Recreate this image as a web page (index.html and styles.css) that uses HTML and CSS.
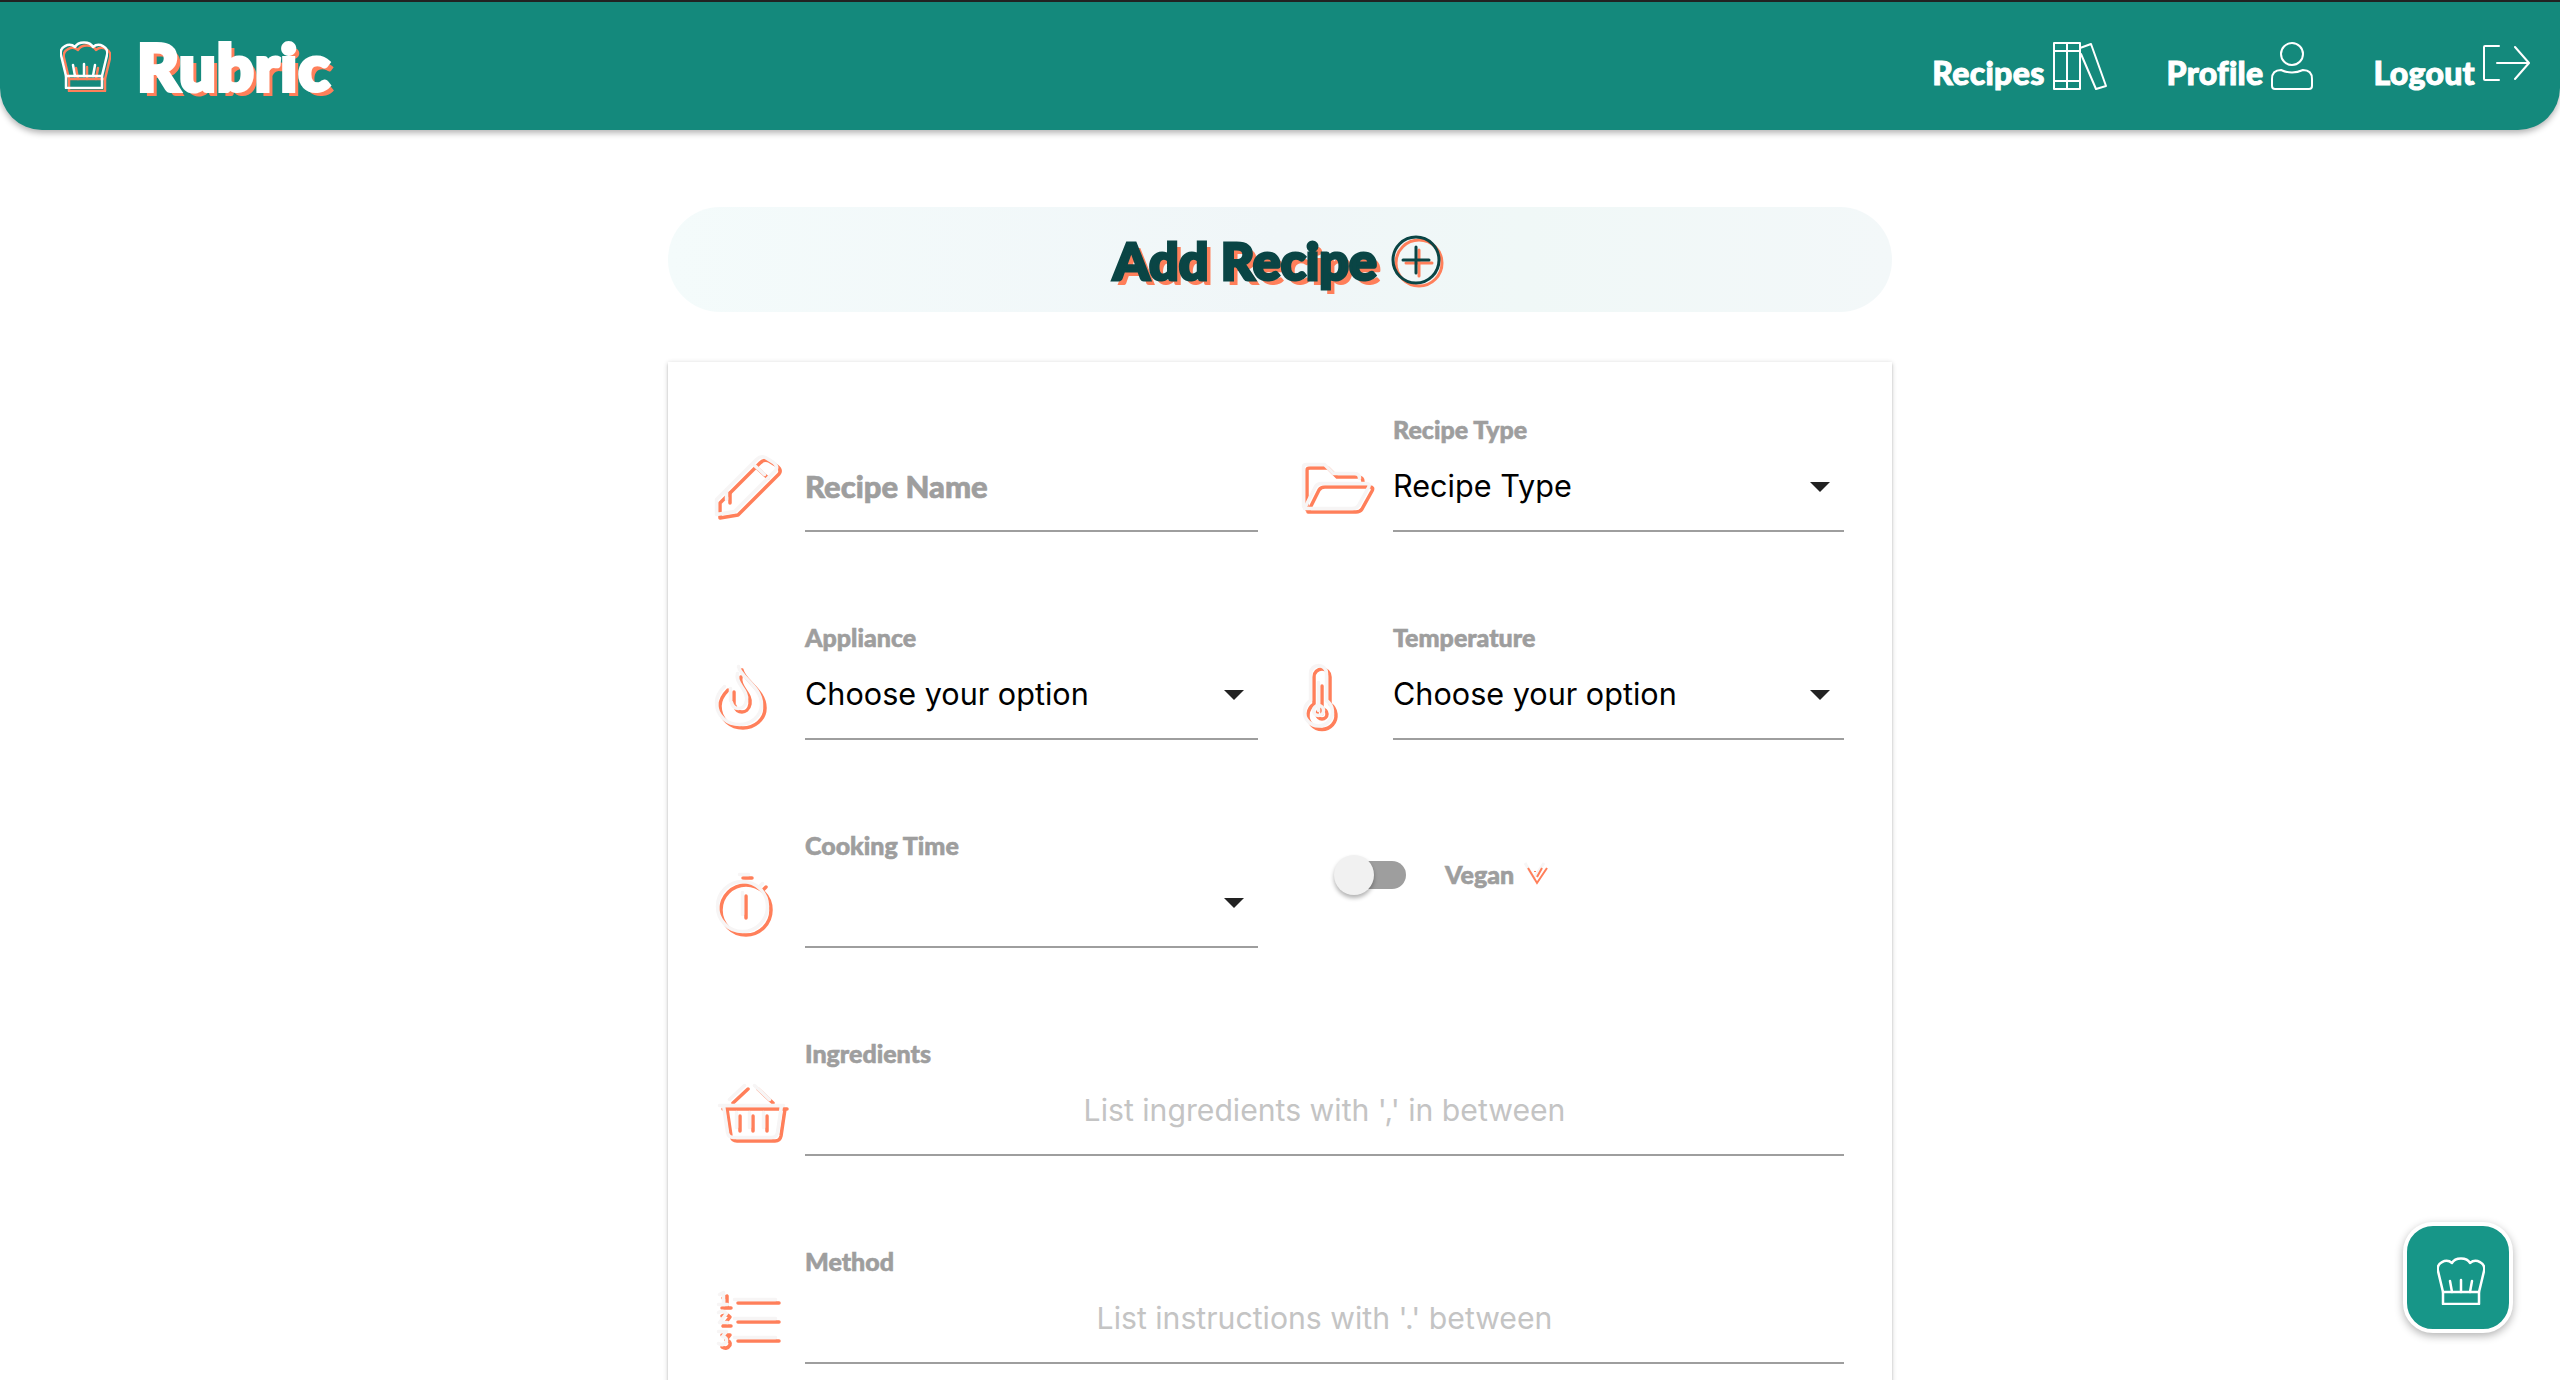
FILE: index.html
```html
<!DOCTYPE html>
<html lang="en">
<head>
  <meta charset="UTF-8" />
  <title>Rubric - Add Recipe</title>
  <link rel="stylesheet" href="styles.css">
</head>
<body>
  <!-- shared icon shapes -->
  <svg class="defs" width="0" height="0">
    <symbol id="hat" viewBox="0 0 48 48" overflow="visible">
      <path d="M6 35 L1 14 C-1 6 9 1 15 6 C18 0 30 0 33 6 C39 1 49 6 47 14 L42 35" />
      <rect x="6" y="35" width="36" height="12" />
      <path d="M13 24 L15 35 M24 23 V35 M35 24 L33 35" />
    </symbol>
    <symbol id="pencil" viewBox="0 0 87 72" overflow="visible">
      <path d="M2 58 L2 43 L42 3 Q46 -1 51 1 L59 6 Q64 10 61 14 L20 55 Z" />
      <path d="M39 8 L50 18 M12 33 V43" />
    </symbol>
    <symbol id="folder" viewBox="0 0 87 72" overflow="visible">
      <path d="M1 50 V10 Q1 8 4 8 H22 L31 17 H52 Q57 17 57 22" />
      <path d="M2 52 L13 30 Q15 27 19 27 H64 Q68 27 66 31 L56 49 Q54 52 50 52 Z" />
    </symbol>
    <symbol id="flame" viewBox="0 0 87 72" overflow="visible">
      <path d="M24 2 C26 13 47 22 47 40 C47 52 36 60 25 60 C13 60 2 52 2 38 C2 31 6 26 10 22" />
      <path d="M23 9 C20 19 34 25 32 36 C31 42 27 44 24 44 C21 44 18 42 17 38 M16 24 V36" />
    </symbol>
    <symbol id="thermo" viewBox="0 0 87 72" overflow="visible">
      <path d="M8 36 V9 A8 8 0 0 1 24 9 V36 A14 14 0 1 1 8 36 Z" />
      <path d="M16 18 V46" />
      <circle class="dot" cx="16" cy="46" r="5" />
    </symbol>
    <symbol id="timer" viewBox="0 0 87 72" overflow="visible">
      <circle cx="28" cy="34" r="25" />
      <path d="M25 2 H34 M45 14 L48 11 M28 20 V42" />
    </symbol>
    <symbol id="basket" viewBox="0 0 87 72" overflow="visible">
      <path d="M5 25 H69 M9 25 L13 52 Q14 57 19 57 H57 Q62 57 63 52 L67 25" />
      <path d="M15 19 L30 5 M40 5 L55 19 M22 32 V47 M35 32 V47 M49 32 V47" />
    </symbol>
    <symbol id="steps" viewBox="0 0 87 72" overflow="visible">
      <path d="M20 11 H61 M20 30 H61 M20 49 H61" />
      <path d="M5 6 L9 4 V16 M4 16 H13" />
      <path d="M4 24 Q9 21 12 25 L5 34 H13" />
      <path d="M4 43 H12 L8 48 Q13 49 12 53 Q9 58 4 55" />
    </symbol>
  </svg>

  <nav class="topbar">
    <a class="brand" href="#">
      <span class="hat-logo">
        <svg class="hat-back" width="48" height="48"><use href="#hat" /></svg>
        <svg class="hat-front" width="48" height="48"><use href="#hat" /></svg>
      </span>
      <span class="brand-name">Rubric</span>
    </a>
    <ul class="nav-links">
      <li>
        <a href="#"><span>Recipes</span>
          <svg width="54" height="48" viewBox="0 0 54 48">
            <rect x="1" y="1" width="26" height="46" />
            <path d="M14 1 V47 M1 9 H27 M1 39 H27" />
            <path d="M27 6 L38 2 L53 44 L43 47 L28 12" />
          </svg>
        </a>
      </li>
      <li>
        <a href="#"><span>Profile</span>
          <svg width="42" height="48" viewBox="0 0 42 48">
            <ellipse cx="21" cy="12" rx="11" ry="11" />
            <path d="M1 44 V37 Q1 28 10 28 Q21 33 32 28 Q41 28 41 37 V44 Q41 47 38 47 H4 Q1 47 1 44 Z" />
          </svg>
        </a>
      </li>
      <li>
        <a class="logout" href="#"><span>Logout</span>
          <svg width="47" height="36" viewBox="0 0 47 36">
            <path d="M16 1 H2 Q1 1 1 2 V34 Q1 35 2 35 H16" />
            <path d="M14 18 H46 M32 2 L46 18 L32 34" />
          </svg>
        </a>
      </li>
    </ul>
  </nav>

  <main class="page">
    <h1 class="title">
      <span>Add Recipe</span>
      <svg class="plus" width="56" height="56" viewBox="0 0 56 56">
        <g class="plus-back">
          <circle cx="28" cy="28" r="23" />
          <path d="M15 28 H41 M28 15 V41" />
        </g>
        <g class="plus-front">
          <circle cx="25" cy="25" r="23" />
          <path d="M12 25 H38 M25 12 V38" />
        </g>
      </svg>
    </h1>

    <form class="card">
      <div class="form-grid">
        <div class="field">
          <svg class="ico"><use class="back" href="#pencil" /><use class="front" href="#pencil" /></svg>
          <div class="control">
            <div class="label"></div>
            <div class="box"><span class="name-hint">Recipe Name</span></div>
          </div>
        </div>

        <div class="field">
          <svg class="ico"><use class="back" href="#folder" /><use class="front" href="#folder" /></svg>
          <div class="control">
            <div class="label">Recipe Type</div>
            <div class="box"><span>Recipe Type</span><i class="caret"></i></div>
          </div>
        </div>

        <div class="field">
          <svg class="ico"><use class="back" href="#flame" /><use class="front" href="#flame" /></svg>
          <div class="control">
            <div class="label">Appliance</div>
            <div class="box"><span>Choose your option</span><i class="caret"></i></div>
          </div>
        </div>

        <div class="field">
          <svg class="ico"><use class="back" href="#thermo" /><use class="front" href="#thermo" /></svg>
          <div class="control">
            <div class="label">Temperature</div>
            <div class="box"><span>Choose your option</span><i class="caret"></i></div>
          </div>
        </div>

        <div class="field">
          <svg class="ico"><use class="back" href="#timer" /><use class="front" href="#timer" /></svg>
          <div class="control">
            <div class="label">Cooking Time</div>
            <div class="box"><span></span><i class="caret"></i></div>
          </div>
        </div>

        <div class="vegan">
          <div class="switch"><i class="thumb"></i></div>
          <span class="label">Vegan</span>
          <svg class="vegan-mark" width="22" height="24" viewBox="0 0 22 24">
            <path class="v-front" d="M1 6 L10 21 L20 6" transform="translate(-3 -5)" />
            <path class="v-back" d="M1 6 L10 21 L20 6 M15 6 L10 15 M8 9 V10" />
          </svg>
        </div>

        <div class="field wide">
          <svg class="ico"><use class="back" href="#basket" /><use class="front" href="#basket" /></svg>
          <div class="control">
            <div class="label">Ingredients</div>
            <div class="box hint">List ingredients with ',' in between</div>
          </div>
        </div>

        <div class="field wide">
          <svg class="ico"><use class="back" href="#steps" /><use class="front" href="#steps" /></svg>
          <div class="control">
            <div class="label">Method</div>
            <div class="box hint">List instructions with '.' between</div>
          </div>
        </div>
      </div>
    </form>
  </main>

  <a class="fab" href="#">
    <svg width="48" height="48"><use href="#hat" /></svg>
  </a>
</body>
</html>
```

FILE: styles.css
```css
* {
  box-sizing: border-box;
}

html, body {
  height: 1380px;
  overflow: hidden;
}

body {
  margin: 0;
  background: #fff;
  font-family: Inter, "Liberation Sans", sans-serif;
  color: #000;
}

a {
  color: inherit;
  text-decoration: none;
}

.defs {
  position: absolute;
}

symbol {
  fill: none;
  stroke-linecap: round;
  stroke-linejoin: round;
}

/* top bar */
.topbar {
  height: 130px;
  border-top: 2px solid #222;
  background: #14897c;
  border-radius: 0 0 42px 42px;
  box-shadow: 0 3px 6px rgba(0, 0, 0, 0.3);
  display: flex;
  justify-content: space-between;
  align-items: center;
  padding: 0 30px 0 60px;
  color: #fff;
  font-family: Lato, sans-serif;
  font-weight: 900;
}

.brand {
  display: flex;
  align-items: center;
  gap: 26px;
}

.hat-logo {
  position: relative;
  width: 51px;
  height: 51px;
}

.hat-logo svg {
  position: absolute;
  fill: none;
  stroke-width: 2.5;
}

.hat-back {
  left: 3px;
  top: 3px;
  stroke: #ff7f5a;
}

.hat-front {
  left: 0;
  top: 0;
  stroke: #fff;
}

.brand-name {
  font-size: 65px;
  line-height: 64px;
  letter-spacing: 1px;
  -webkit-text-stroke: 4px #fff;
  text-shadow: 5px 5px 0 #ff7f5a;
}

.nav-links {
  display: flex;
  gap: 60px;
  list-style: none;
  margin: 0;
  padding: 0;
}

.nav-links a {
  display: flex;
  align-items: center;
  gap: 8px;
  font-size: 32px;
  letter-spacing: 0.3px;
  -webkit-text-stroke: 1px #fff;
}

.nav-links span {
  margin-top: 12px;
}

.nav-links svg {
  fill: none;
  stroke: #fff;
  stroke-width: 2;
  stroke-linecap: round;
  stroke-linejoin: round;
}

.nav-links .logout svg {
  margin-top: -6px;
}

/* page */
.page {
  width: 1224px;
  margin: 77px auto 0;
}

.title {
  height: 105px;
  margin: 0 0 50px;
  border-radius: 52px;
  background: linear-gradient(90deg, #f4fbfb, #f0f6f8 50%, #f0f8f7 70%, #f3f8f9);
  display: flex;
  justify-content: center;
  align-items: center;
  gap: 14px;
  font-family: Lato, sans-serif;
  font-size: 52px;
  font-weight: 900;
  color: #0a4545;
  -webkit-text-stroke: 3px #0a4545;
  text-shadow: 5px 5px 0 #ff7f5a;
}

.plus {
  margin-top: 6px;
  fill: none;
  stroke-width: 3;
  stroke-linecap: round;
}

.plus-back {
  stroke: #ff7f5a;
}

.plus-front {
  stroke: #0a4545;
}

.card {
  height: 1200px;
  padding: 52px 48px 0 50px;
  background: #fff;
  box-shadow: 0 2px 2px rgba(0, 0, 0, 0.14), 0 3px 1px -2px rgba(0, 0, 0, 0.12), 0 1px 5px rgba(0, 0, 0, 0.2);
}

.form-grid {
  display: grid;
  grid-template-columns: 540px 538px;
  column-gap: 48px;
  row-gap: 90px;
}

.field {
  display: flex;
  align-items: flex-end;
}

.wide {
  grid-column: 1 / 3;
}

.ico {
  flex: none;
  width: 87px;
  height: 72px;
  overflow: visible;
}

.ico .back {
  stroke: #ff7f5a;
  stroke-width: 3.5;
  fill: none;
}

.ico .front {
  stroke: #f7f5f5;
  stroke-width: 3.5;
  fill: none;
  transform: translate(-3.5px, -3.5px);
}

.ico .dot {
  fill: currentColor;
}

.control {
  flex: 1;
}

.label {
  height: 30px;
  line-height: 30px;
  font-family: Lato, sans-serif;
  font-size: 25px;
  font-weight: 900;
  color: #9e9e9e;
  -webkit-text-stroke: 0.6px #9e9e9e;
}

.box {
  height: 88px;
  border-bottom: 2px solid #9e9e9e;
  padding: 0 14px 3px 0;
  display: flex;
  justify-content: space-between;
  align-items: center;
  font-size: 30.6px;
}

.name-hint {
  font-family: Lato, sans-serif;
  font-size: 31px;
  font-weight: 900;
  color: #9e9e9e;
  -webkit-text-stroke: 0.7px #9e9e9e;
}

.caret {
  width: 0;
  height: 0;
  margin-top: 2px;
  border-left: 10px solid transparent;
  border-right: 10px solid transparent;
  border-top: 10px solid #222;
}

.hint {
  justify-content: center;
  color: #c4c4c4;
  padding-right: 0;
  font-size: 30.2px;
}

/* vegan toggle */
.vegan {
  display: flex;
  align-items: center;
  height: 30px;
  margin-top: 29px;
  padding-left: 37px;
}

.switch {
  position: relative;
  width: 63px;
  height: 28px;
  margin-top: 2px;
  margin-right: 39px;
  border-radius: 14px;
  background: #9e9e9e;
}

.thumb {
  position: absolute;
  left: -9px;
  top: -6px;
  width: 40px;
  height: 40px;
  border-radius: 50%;
  background: #f1f1f1;
  box-shadow: 0 3px 4px rgba(0, 0, 0, 0.3);
}

.vegan-mark {
  margin-left: 13px;
  fill: none;
  stroke-width: 2;
  overflow: visible;
}

.v-front {
  stroke: #f7f5f5;
  stroke-width: 3;
}

.v-back {
  stroke: #ff7f5a;
}

/* floating button */
.fab {
  position: fixed;
  right: 47px;
  bottom: 47px;
  width: 110px;
  height: 111px;
  padding: 6px 0 0 6px;
  border: 4px solid #fff;
  border-radius: 30px;
  background: #179688;
  box-shadow: 0 3px 8px rgba(0, 0, 0, 0.3);
  display: flex;
  justify-content: center;
  align-items: center;
  fill: none;
  stroke: #fff;
  stroke-width: 2.5;
  stroke-linecap: round;
  stroke-linejoin: round;
}
```
